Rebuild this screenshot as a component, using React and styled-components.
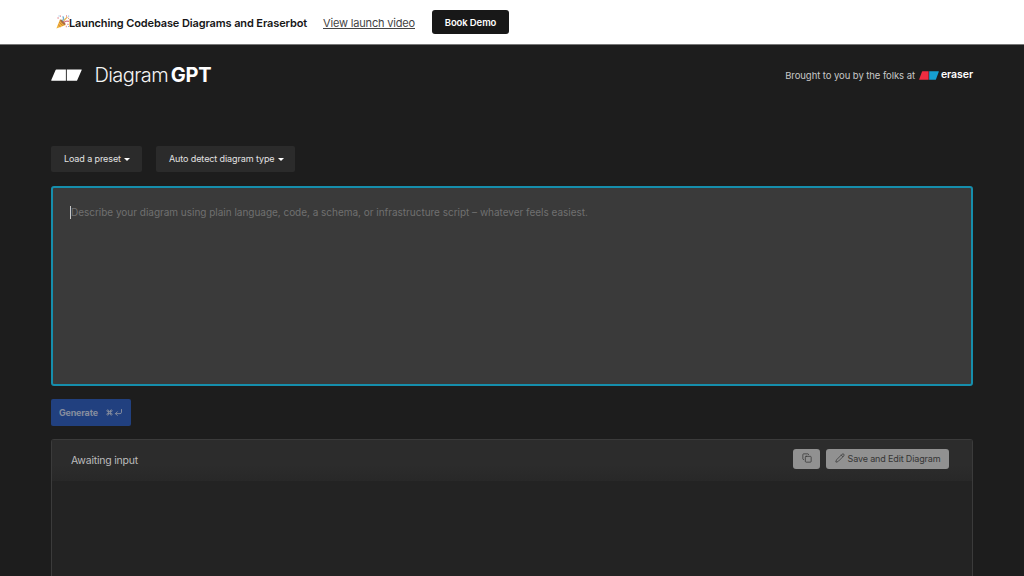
import React from 'react';
import styled, { createGlobalStyle } from 'styled-components';
import { Command, Copy, CornerDownLeft, Pencil } from 'lucide-react';

function PartyIcon() {
  return (
    <svg width="14" height="14" viewBox="0 0 14 14" fill="none">
      <path d="M.4 13.6 4 4.3 9.8 10Z" fill="#f0b43c" />
      <path d="m3.3 7.2 3.5 3.5M2.3 9.8l2.1 2" stroke="#cf7839" strokeWidth="1" />
      <ellipse cx="6.8" cy="7.2" rx="1.2" ry="3.5" transform="rotate(-45 6.8 7.2)" fill="#a76b42" />
      <path d="M6.2 5.8C8 4.8 7.8 2.8 6.7 1.4" stroke="#6fabd0" strokeWidth="1.3" />
      <path d="M8 7.6c1.2-1.9 3-1.8 5-1.2" stroke="#d77083" strokeWidth="1.3" />
      <path d="m7.7 5.8 3.7-3.9" stroke="#e5b755" strokeWidth="1.3" />
      <path d="M1.5 3h1.2M4 1.2h1M10 1h1M12.1 3.4h1M11.3 9.3h1.3M9.8 11.5h1" stroke="#e28b91" strokeWidth="1.3" />
      <path d="M2.6 1h1M12.2 1.2h1M12 11.5h1" stroke="#87b2dc" strokeWidth="1.2" />
    </svg>
  );
}

function LogoMark({ width, height, left = '#fff', right = '#fff' }) {
  return (
    <svg width={width} height={height} viewBox="0 0 31 12" preserveAspectRatio="none">
      <path d="M5.4.4h9.5v11.3H.6Q0 11.7.3 11L4.6.9Q4.8.4 5.4.4Z" fill={left} />
      <path d="M15.8.4h14.6q.6 0 .3.6L26.2 11.2q-.2.5-.8.5h-9.6Z" fill={right} />
    </svg>
  );
}

function App() {
  return (
    <>
      <GlobalStyle />
      <Page>
        <Banner>
          <PartyIcon />
          <BannerTitle>Launching Codebase Diagrams and Eraserbot</BannerTitle>
          <VideoLink href="#">View launch video</VideoLink>
          <DemoButton>Book Demo</DemoButton>
        </Banner>
        <Header>
          <Brand>
            <LogoMark width="31" height="12" />
            <BrandName>Diagram<strong>GPT</strong></BrandName>
          </Brand>
          <Credit>
            <span>Brought to you by the folks at</span>
            <LogoMark width="20" height="9" left="#ec2c40" right="#169fd1" />
            <CreditName>eraser</CreditName>
          </Credit>
        </Header>
        <Main>
          <Toolbar>
            <SelectButton $width="91px">Load a preset<Caret /></SelectButton>
            <SelectButton $width="139px">Auto detect diagram type<Caret /></SelectButton>
          </Toolbar>
          <PromptBox>
            <Cursor />
            <Placeholder>
              Describe your diagram using plain language, code, a schema, or infrastructure script – whatever feels easiest.
            </Placeholder>
          </PromptBox>
          <GenerateButton>
            Generate
            <Shortcut>
              <Command size={7} strokeWidth={3.4} />
              <CornerDownLeft size={9} strokeWidth={2.5} />
            </Shortcut>
          </GenerateButton>
          <Output>
            <OutputHeader>
              <Status>Awaiting input</Status>
              <Actions>
                <ActionButton $width="27px"><Copy size={10} strokeWidth={1.8} /></ActionButton>
                <ActionButton $width="123px">
                  <Pencil size={10} strokeWidth={1.8} />
                  Save and Edit Diagram
                </ActionButton>
              </Actions>
            </OutputHeader>
          </Output>
        </Main>
      </Page>
    </>
  );
}

const GlobalStyle = createGlobalStyle`
  * {
    box-sizing: border-box;
  }
  body {
    margin: 0;
    background: #1d1d1d;
    overflow: hidden;
  }
  button {
    border: none;
    padding: 0;
    font-family: inherit;
  }
  svg {
    flex-shrink: 0;
  }
`;

const Page = styled.div`
  width: 100vw;
  height: 100vh;
  display: flex;
  flex-direction: column;
  overflow: hidden;
  font-family: Inter, sans-serif;
  white-space: nowrap;
`;

const Banner = styled.div`
  height: 45px;
  flex-shrink: 0;
  display: flex;
  align-items: center;
  padding-left: 56px;
  background: #fff;
  border-bottom: 1px solid #777;
`;

const BannerTitle = styled.span`
  width: 238px;
  padding-top: 2px;
  margin-left: -1px;
  color: #161616;
  font-size: 11px;
  font-weight: 600;
  letter-spacing: -0.12px;
`;

const VideoLink = styled.a`
  width: 92px;
  padding-top: 2px;
  margin-left: 16px;
  color: #444;
  font-size: 11px;
  letter-spacing: -0.17px;
  text-decoration: underline;
  text-underline-offset: 1px;
`;

const DemoButton = styled.button`
  width: 77px;
  height: 24px;
  margin-left: 17px;
  border-radius: 3px;
  background: #181818;
  color: #fff;
  font-size: 9.5px;
  font-weight: 600;
  letter-spacing: -0.1px;
`;

const Header = styled.header`
  height: 60px;
  flex-shrink: 0;
  display: flex;
  align-items: center;
  justify-content: space-between;
  padding: 0 51px;
`;

const Brand = styled.div`
  display: flex;
  align-items: center;
  gap: 12.5px;
`;

const BrandName = styled.div`
  color: #f4f4f4;
  font-size: 20px;
  font-weight: 300;
  letter-spacing: -0.6px;
  strong {
    margin-left: 2.7px;
    color: #fff;
    font-weight: 700;
    letter-spacing: -0.2px;
  }
`;

const Credit = styled.div`
  display: flex;
  align-items: center;
  color: #c8c8c8;
  font-size: 9.5px;
  letter-spacing: -0.07px;
  svg {
    margin-left: 4px;
  }
`;

const CreditName = styled.span`
  margin-left: 2px;
  padding-bottom: 2px;
  color: #fff;
  font-size: 10.5px;
  font-weight: 600;
`;

const Main = styled.main`
  display: flex;
  flex: 1;
  flex-direction: column;
  padding: 41px 51px 0;
`;

const Toolbar = styled.div`
  display: flex;
  gap: 14px;
  margin-bottom: 14px;
`;

const SelectButton = styled.button`
  width: ${(props) => props.$width};
  height: 26px;
  display: flex;
  align-items: center;
  gap: 3.5px;
  padding: 0 0 1px 13px;
  border-radius: 2px;
  background: #2b2b2b;
  color: #e2e2e2;
  font-size: 9px;
  letter-spacing: -0.1px;
`;

const Caret = styled.span`
  margin-top: 2px;
  border-top: 3px solid #fff;
  border-left: 3px solid transparent;
  border-right: 3px solid transparent;
`;

const PromptBox = styled.div`
  height: 200px;
  flex-shrink: 0;
  display: flex;
  align-items: flex-start;
  padding: 18px 17px;
  border: 2px solid #168eac;
  border-radius: 3px;
  background: #3a3a3a;
`;

const Cursor = styled.span`
  width: 1px;
  height: 13px;
  background: #c8c8c8;
`;

const Placeholder = styled.span`
  color: #707070;
  font-size: 10px;
  line-height: 13px;
  letter-spacing: -0.02px;
`;

const GenerateButton = styled.button`
  width: 80px;
  height: 27px;
  flex-shrink: 0;
  display: flex;
  align-items: center;
  gap: 8px;
  margin: 13px 0;
  padding: 0 0 1px 8px;
  border-radius: 2px;
  background: #21407f;
  color: #858d9e;
  font-size: 9px;
  font-weight: 700;
  letter-spacing: -0.2px;
`;

const Shortcut = styled.span`
  display: flex;
  align-items: center;
  gap: 1px;
`;

const Output = styled.section`
  flex: 1;
  border: 1px solid #3b3b3b;
  border-bottom: none;
  border-radius: 3px 3px 0 0;
  background: #232323;
`;

const OutputHeader = styled.div`
  height: 41px;
  display: flex;
  align-items: flex-start;
  justify-content: space-between;
  padding: 9px 23px 0 19px;
  background: linear-gradient(#2c2c2c 60%, #282828);
`;

const Status = styled.span`
  margin-top: 5px;
  color: #bcbcbc;
  font-size: 10.5px;
  line-height: 13px;
  letter-spacing: -0.21px;
`;

const Actions = styled.div`
  display: flex;
  gap: 6px;
`;

const ActionButton = styled.button`
  width: ${(props) => props.$width};
  height: 20px;
  display: flex;
  align-items: center;
  justify-content: center;
  gap: 3px;
  padding-bottom: 2px;
  border-radius: 3px;
  background: #919191;
  color: #353535;
  font-size: 9px;
  letter-spacing: -0.15px;
`;

export default App;
